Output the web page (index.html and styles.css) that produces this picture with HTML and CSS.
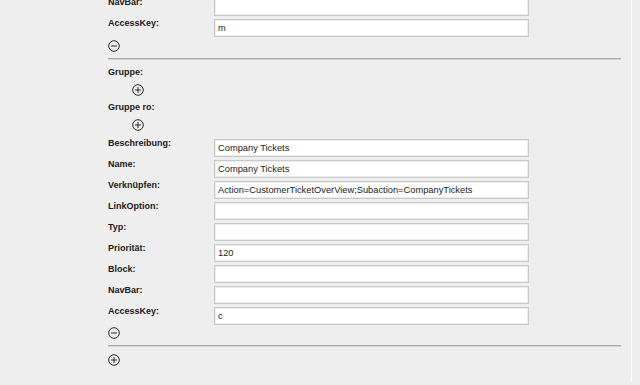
FILE: index.html
```html
<!DOCTYPE html>
<html lang="de">

<head>
    <meta charset="UTF-8">
    <title>Kundenmenue</title>
    <link rel="stylesheet" href="styles.css">
</head>

<body>
    <div class="page">
        <div class="form">
            <div class="row"><label>NavBar:</label><input type="text" value=""></div>
            <div class="row"><label>AccessKey:</label><input type="text" value="m"></div>
            <a href="#" class="icon remove-top" title="Entfernen">
                <svg width="12" height="12" viewBox="0 0 12 12"><circle cx="6" cy="6" r="5.3" /><line x1="3" y1="6" x2="9" y2="6" /></svg>
            </a>
            <hr class="sep">

            <div class="group-label">Gruppe:</div>
            <a href="#" class="icon add-group" title="Hinzufügen">
                <svg width="12" height="12" viewBox="0 0 12 12"><circle cx="6" cy="6" r="5.3" /><line x1="3" y1="6" x2="9" y2="6" /><line x1="6" y1="3" x2="6" y2="9" /></svg>
            </a>
            <div class="group-label second">Gruppe ro:</div>
            <a href="#" class="icon add-group" title="Hinzufügen">
                <svg width="12" height="12" viewBox="0 0 12 12"><circle cx="6" cy="6" r="5.3" /><line x1="3" y1="6" x2="9" y2="6" /><line x1="6" y1="3" x2="6" y2="9" /></svg>
            </a>

            <div class="fields">
                <div class="row"><label>Beschreibung:</label><input type="text" value="Company Tickets"></div>
                <div class="row"><label>Name:</label><input type="text" value="Company Tickets"></div>
                <div class="row"><label>Verknüpfen:</label><input type="text" value="Action=CustomerTicketOverView;Subaction=CompanyTickets"></div>
                <div class="row"><label>LinkOption:</label><input type="text" value=""></div>
                <div class="row"><label>Typ:</label><input type="text" value=""></div>
                <div class="row"><label>Priorität:</label><input type="text" value="120"></div>
                <div class="row"><label>Block:</label><input type="text" value=""></div>
                <div class="row"><label>NavBar:</label><input type="text" value=""></div>
                <div class="row"><label>AccessKey:</label><input type="text" value="c"></div>
            </div>
            <a href="#" class="icon remove-bottom" title="Entfernen">
                <svg width="12" height="12" viewBox="0 0 12 12"><circle cx="6" cy="6" r="5.3" /><line x1="3" y1="6" x2="9" y2="6" /></svg>
            </a>
            <hr class="sep sep-bottom">
            <a href="#" class="icon add-entry" title="Hinzufügen">
                <svg width="12" height="12" viewBox="0 0 12 12"><circle cx="6" cy="6" r="5.3" /><line x1="3" y1="6" x2="9" y2="6" /><line x1="6" y1="3" x2="6" y2="9" /></svg>
            </a>
        </div>
    </div>
</body>

</html>
```

FILE: styles.css
```css
* {
    margin: 0;
    padding: 0;
    box-sizing: border-box;
}

body {
    background-color: #eeeeee;
    font-family: "Liberation Sans", Arial, sans-serif;
    color: #1a1a1a;
    overflow: hidden;
}

.page {
    width: 632px;
    min-height: 100vh;
    border-right: 1px solid #fbfbfb;
}

.form {
    margin-top: -3px;
    padding-left: 108px;
    padding-right: 10px;
}

.row {
    display: flex;
    height: 21px;
}

.row label,
.group-label {
    display: block;
    width: 106px;
    font-size: 9px;
    font-weight: bold;
    line-height: 11px;
}

.row input {
    width: 315px;
    height: 18px;
    margin-top: 1px;
    padding: 0 3px;
    border: 1px solid #c9c9c9;
    box-shadow: inset 0 0 0 1px #ececec;
    background-color: #fff;
    font-family: "Liberation Sans", Arial, sans-serif;
    font-size: 9.3px;
    color: #222;
    outline: none;
}

.icon {
    display: block;
    width: 12px;
    height: 12px;
}

.icon svg {
    display: block;
    fill: none;
    stroke: #2a2a2a;
    stroke-width: 1;
}

.remove-top {
    margin-top: 1px;
}

.sep {
    height: 0;
    margin-top: 6px;
    border: 0;
    border-top: 1px solid #a8a8a8;
    border-bottom: 1px solid #d4d4d4;
}

.group-label {
    margin-top: 7px;
}

.group-label.second {
    margin-top: 6px;
}

.add-group {
    margin-top: 6px;
    margin-left: 24px;
}

.fields {
    margin-top: 7px;
}

.remove-bottom {
    margin-top: 0;
}

.sep-bottom {
    margin-top: 6px;
}

.add-entry {
    margin-top: 7px;
}
```
